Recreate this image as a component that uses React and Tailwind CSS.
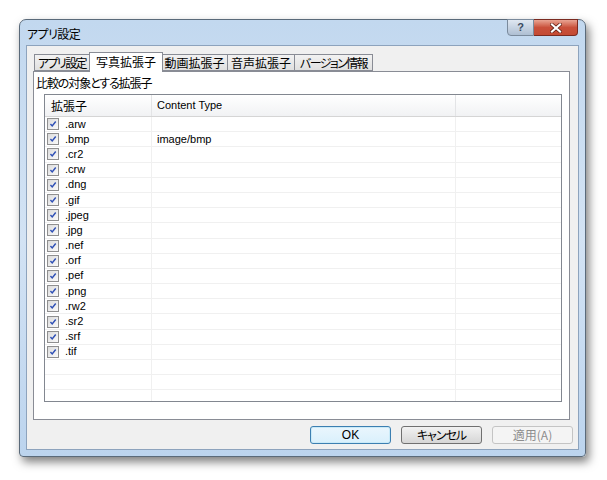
import React from "react";

const exts = [".arw", ".bmp", ".cr2", ".crw", ".dng", ".gif", ".jpeg", ".jpg", ".nef", ".orf", ".pef", ".png", ".rw2", ".sr2", ".srf", ".tif"];
const types = { ".bmp": "image/bmp" };
const tabs = [
  { t: "アプリ設定", w: "w-[56px] tracking-[-1.6px]" },
  { t: "写真拡張子", w: "w-[74px]" },
  { t: "動画拡張子", w: "w-[66px]" },
  { t: "音声拡張子", w: "w-[67px]" },
  { t: "バージョン情報", w: "w-[78px] tracking-[-1.6px]" },
];

const lat = "font-['Liberation_Sans','Noto_Sans_CJK_JP',sans-serif]";

const Check = () => (
  <div className="w-[12px] h-[12px] border border-[#8f8f8f] bg-gradient-to-br from-[#dcdcdc] to-[#fafafa] p-[1px] shrink-0">
    <svg viewBox="0 0 10 10" className="w-full h-full">
      <path d="M1.8 5 L4 7.4 L8.4 1.8" fill="none" stroke="#2f50b5" strokeWidth="1.8" />
    </svg>
  </div>
);

const Button = ({ children, primary, disabled, extra = "" }) => (
  <button
    className={`w-[81px] h-[18px] rounded-[3px] border text-[12px] leading-none flex items-center justify-center ${extra} ${
      primary
        ? "border-[#3c7fb1] bg-gradient-to-b from-[#eaf6fd] to-[#d9f0fc] text-black shadow-[inset_0_0_0_1px_#c9eaf8]"
        : disabled
        ? "border-[#c4c4c4] bg-[#f4f4f4] text-[#8d8d8d]"
        : "border-[#707070] bg-gradient-to-b from-[#f2f2f2] to-[#d6d6d6] text-black"
    }`}
  >
    {children}
  </button>
);

export default function App() {
  const rows = [...exts, "", "", ""];
  return (
    <div className="w-[607px] h-[480px] bg-white overflow-hidden font-['Noto_Sans_CJK_JP','Noto_Sans',sans-serif] [font-feature-settings:'palt']">
      <div className="ml-[19px] mt-[19px] w-[567px] h-[438px] rounded-t-[7px] rounded-b-[4px] border border-[#5a6a7a] bg-gradient-to-b from-[#c2d8ef] via-[#d3e3f4] to-[#bcd4ee] shadow-[3px_5px_10px_rgba(0,0,0,0.5)] flex flex-col px-[6px] pb-[6px]">
        <div className="h-[25px] flex items-start justify-between">
          <div className="pt-[5px] pl-[1px] text-[12px] tracking-[-0.6px] text-black">アプリ設定</div>
          <div className="flex -mt-[1px] mr-[1px]">
            <div className={`w-[27px] h-[17px] rounded-bl-[4px] border border-[#7a8a9c] bg-gradient-to-b from-[#dfe7f1] to-[#aebfd3] flex items-center justify-center text-[11px] font-bold text-[#3b4b5f] ${lat}`}>
              ?
            </div>
            <div className="w-[44px] h-[17px] rounded-br-[4px] border border-l-0 border-[#7a2a20] bg-gradient-to-b from-[#e8a493] via-[#c9503b] to-[#c44a33] flex items-center justify-center">
              <svg viewBox="0 0 12 10" className="w-[12px] h-[10px]">
                <path d="M2 1.5 L10 8.5 M10 1.5 L2 8.5" stroke="#5a1a10" strokeWidth="3.6" strokeLinecap="square" />
                <path d="M2 1.5 L10 8.5 M10 1.5 L2 8.5" stroke="#ffffff" strokeWidth="2.2" strokeLinecap="square" />
              </svg>
            </div>
          </div>
        </div>
        <div className="flex-1 bg-[#f0f0f0] border border-[#8da3bd] flex flex-col pl-[6px] pr-[8px] pt-[6px]">
          <div className="flex items-end h-[19px] pl-[1px] relative z-10">
            {tabs.map((tab, i) =>
              i === 1 ? (
                <div key={tab.t} className={`h-[20px] -mb-[1px] border border-b-0 border-[#898c95] bg-white text-[12px] leading-[18px] text-center -mx-[1px] relative z-10 ${tab.w}`}>
                  {tab.t}
                </div>
              ) : (
                <div key={tab.t} className={`h-[17px] border border-[#898c95] bg-gradient-to-b from-[#f2f2f2] to-[#e0e0e0] text-[12px] leading-[16px] text-center whitespace-nowrap ${tab.w} ${i > 0 ? "border-l-0" : ""}`}>
                  {tab.t}
                </div>
              )
            )}
          </div>
          <div className="h-[349px] bg-white border border-[#898c95] flex flex-col pl-[2px] pt-[4px]">
            <div className="text-[12px] leading-[14px] tracking-[-1.1px] text-black">比較の対象とする拡張子</div>
            <div className="mt-[4px] ml-[8px] w-[518px] h-[308px] border border-[#828790] overflow-hidden">
              <div className="flex h-[22px] bg-gradient-to-b from-white to-[#f1f2f4] border-b border-[#d5d5d5] text-[12px]">
                <div className="w-[107px] border-r border-[#e3e4e6] pl-[6px] flex items-center">拡張子</div>
                <div className={`w-[304px] border-r border-[#e3e4e6] pl-[5px] flex items-center text-[11px] ${lat}`}>Content Type</div>
                <div className="flex-1" />
              </div>
              {rows.map((e, i) => (
                <div key={i} className={`flex h-[15.2px] border-b border-[#f0f0f0] text-[11px] leading-none ${lat}`}>
                  <div className="w-[107px] border-r border-[#f0f0f0] pl-[2px] flex items-center gap-[6px]">
                    {e && <Check />}
                    <span>{e}</span>
                  </div>
                  <div className="w-[304px] border-r border-[#f0f0f0] pl-[5px] flex items-center">{types[e] || ""}</div>
                  <div className="flex-1" />
                </div>
              ))}
            </div>
          </div>
          <div className="flex justify-end gap-[10px] mt-[6px] -mr-[3px]">
            <Button primary extra={lat}>OK</Button>
            <Button extra="tracking-[-1px]">キャンセル</Button>
            <Button disabled>適用(A)</Button>
          </div>
        </div>
      </div>
    </div>
  );
}
